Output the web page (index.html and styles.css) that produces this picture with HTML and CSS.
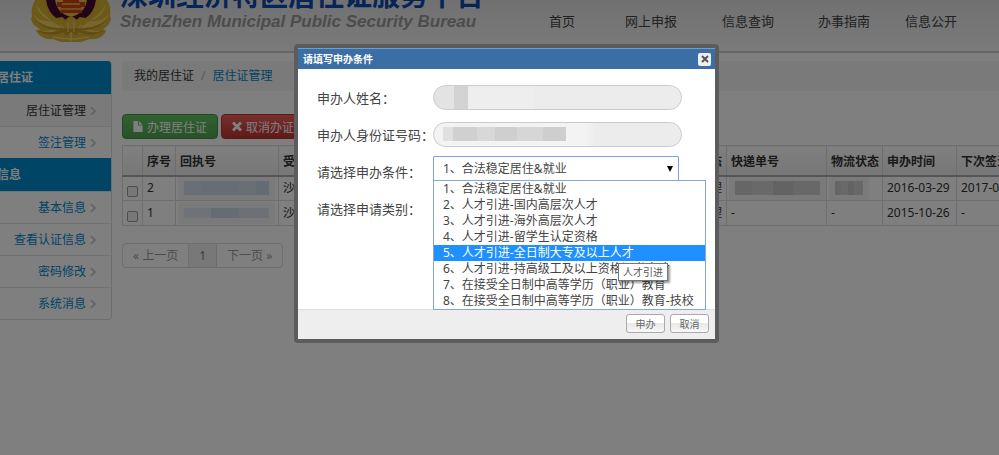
FILE: index.html
```html
<!DOCTYPE html>
<html lang="zh-CN">
<head>
<meta charset="UTF-8" />
<meta name="viewport" content="width=device-width, initial-scale=1" />
<title>深圳经济特区居住证服务平台</title>
<link rel="stylesheet" href="styles.css">
</head>
<body>
<header class="header">
  <div class="brand">
    <svg class="emblem" viewBox="0 0 80 44" aria-hidden="true">
      <path fill="#d9b130" d="M5 0C1 5 0 12 1 17L0 20c1 5 5 8 9 10l-4 2c4 6 10 9 17 8l8 3h20l9-3c7 1 13-2 16-8l-3-2c4-2 7-5 8-10l-1-4c1-5 0-11-4-16z"/>
      <path fill="#ecd05a" d="M5 5c2 9 8 15 16 17-8 1-15-2-19-7 4 8 11 14 20 15-6 3-12 2-16 1 8 5 18 3 24-3C20 22 11 15 5 5zM75 5c-2 9-8 15-16 17 8 1 15-2 19-7-4 8-11 14-20 15 6 3 12 2 16 1-8 5-18 3-24-3 10-6 19-13 25-23z"/>
      <path fill="#c0962a" d="M3 20c7 8 17 12 28 11-10 3-19 3-27-1 9 7 20 7 28 3l3 4 5-4 5 4 3-4c8 4 19 4 28-3-8 4-17 4-27 1 11 1 21-3 28-11-9 7-20 10-32 9H35C23 30 12 27 3 20z"/>
      <path fill="#42092e" stroke="#d9ac24" stroke-width="2" d="M14 0c1 10 5 16 11 20l6-1 3 3 4-3h4l4 3 3-3 6 1C61 16 65 10 66 0z"/>
      <path fill="#e0bd4a" d="M24 0h32c-1 9-5 15-16 18C29 15 25 9 24 0z"/>
      <path fill="#cc4218" d="M26 3h6V0h16v3h6v5h-4l1 6H29l1-6h-4z"/>
      <path fill="#e39a3c" d="M31 4h18v2H31zM30 9h20v2H30z"/>
      <circle cx="40" cy="25" r="5" fill="#dcb536"/>
      <path stroke="#f0dc88" fill="none" d="M29 26l4 3m4-5v9m6-9v9m8-7l-4 3M22 38l15 2h8l13-2M40 33v9"/>
    </svg>
    <div class="brand-text">
      <strong>深圳经济特区居住证服务平台</strong>
      <em>ShenZhen Municipal Public Security Bureau</em>
    </div>
  </div>
  <nav class="nav">
    <a href="#">首页</a>
    <a href="#">网上申报</a>
    <a href="#">信息查询</a>
    <a href="#">办事指南</a>
    <a href="#">信息公开</a>
  </nav>
</header>

<div class="page">
  <aside class="sidebar">
    <h2>居住证</h2>
    <a href="#" class="active">居住证管理<svg viewBox="0 0 6 8"><path d="M1 0l4 4-4 4"/></svg></a>
    <a href="#">签注管理<svg viewBox="0 0 6 8"><path d="M1 0l4 4-4 4"/></svg></a>
    <h2>信息</h2>
    <a href="#">基本信息<svg viewBox="0 0 6 8"><path d="M1 0l4 4-4 4"/></svg></a>
    <a href="#">查看认证信息<svg viewBox="0 0 6 8"><path d="M1 0l4 4-4 4"/></svg></a>
    <a href="#">密码修改<svg viewBox="0 0 6 8"><path d="M1 0l4 4-4 4"/></svg></a>
    <a href="#">系统消息<svg viewBox="0 0 6 8"><path d="M1 0l4 4-4 4"/></svg></a>
  </aside>

  <main class="main">
    <div class="breadcrumb">
      <span>我的居住证</span><i>/</i><a href="#">居住证管理</a>
    </div>
    <div class="toolbar">
      <button type="button" class="btn btn-green"><svg viewBox="0 0 10 12"><path d="M0 0h5v5h5v7H0zM6 0l4 4H6z"/></svg>办理居住证</button>
      <button type="button" class="btn btn-red"><svg viewBox="0 0 10 10"><path d="M2 0l3 3 3-3 2 2-3 3 3 3-2 2-3-3-3 3-2-2 3-3-3-3z"/></svg>取消办证</button>
    </div>
    <div class="table-wrap">
      <table>
        <colgroup>
          <col class="c-check"><col class="c-no"><col class="c-receipt"><col class="c-place"><col class="c-state">
          <col class="c-express"><col class="c-flow"><col class="c-date"><col class="c-date">
        </colgroup>
        <thead>
          <tr><th></th><th>序号</th><th>回执号</th><th>受理点</th><th class="right">办理状态</th><th>快递单号</th><th>物流状态</th><th>申办时间</th><th>下次签注</th></tr>
        </thead>
        <tbody>
          <tr>
            <td><input type="checkbox" aria-label="选择 2"></td><td>2</td><td><span class="mask mask-blue"></span></td><td>沙井</td><td class="right">已受理</td>
            <td><span class="mask"></span></td><td><span class="mask mask-short"></span></td><td>2016-03-29</td><td>2017-03-29</td>
          </tr>
          <tr>
            <td><input type="checkbox" aria-label="选择 1"></td><td>1</td><td><span class="mask mask-blue mask-low"></span></td><td>沙井</td><td class="right">已受理</td>
            <td>-</td><td>-</td><td>2015-10-26</td><td>-</td>
          </tr>
        </tbody>
      </table>
    </div>
    <div class="pager">
      <div class="pages">
        <a href="#">« 上一页</a><a href="#" class="current">1</a><a href="#">下一页 »</a>
      </div>
      <span>当前第1页</span>
    </div>
  </main>
</div>

<div class="overlay"></div>

<div class="dialog" role="dialog" aria-labelledby="dialogTitle">
  <div class="dialog-title">
    <h3 id="dialogTitle">请填写申办条件</h3>
    <button type="button" class="close" aria-label="关闭"><svg viewBox="0 0 8 8"><path d="M1 1l6 6M7 1L1 7"/></svg></button>
  </div>
  <form class="dialog-body">
    <div class="row">
      <label for="name">申办人姓名：</label>
      <input type="text" id="name" class="mask-name" readonly>
    </div>
    <div class="row">
      <label for="idNo">申办人身份证号码：</label>
      <input type="text" id="idNo" class="mask-id" readonly>
    </div>
    <div class="row">
      <label for="condition">请选择申办条件：</label>
      <div class="select-box">
        <select id="condition">
          <option>1、合法稳定居住&amp;就业</option>
        </select>
        <svg class="arrow" viewBox="0 0 6 6"><path d="M0 0h6L3 6z"/></svg>
        <ul class="options" role="listbox" aria-label="申办条件">
          <li role="option">1、合法稳定居住&amp;就业</li>
          <li role="option">2、人才引进-国内高层次人才</li>
          <li role="option">3、人才引进-海外高层次人才</li>
          <li role="option">4、人才引进-留学生认定资格</li>
          <li role="option" class="hover">5、人才引进-全日制大专及以上人才</li>
          <li role="option">6、人才引进-持高级工及以上资格证书人才</li>
          <li role="option">7、在接受全日制中高等学历（职业）教育</li>
          <li role="option">8、在接受全日制中高等学历（职业）教育-技校</li>
        </ul>
        <span class="tooltip" role="tooltip">人才引进</span>
      </div>
    </div>
    <div class="row">
      <span>请选择申请类别：</span>
    </div>
  </form>
  <div class="dialog-footer">
    <button type="button">申办</button>
    <button type="button">取消</button>
  </div>
</div>
</body>
</html>
```
FILE: styles.css
```css
* { box-sizing: border-box; }
body {
  margin: 0;
  min-height: 100vh;
  overflow: hidden;
  background: #fff;
  color: #333;
  font: 12px/18px "Noto Sans", "Noto Sans CJK SC", sans-serif;
}
a { color: #08c; text-decoration: none; }
button, input, select { font-family: inherit; margin: 0; }

.header {
  display: flex;
  height: 53px;
  overflow: hidden;
  background: linear-gradient(#e2e2e2, #f5f5f5);
  border-bottom: 2px solid #ccc;
}
.brand {
  display: flex;
  flex: none;
  align-items: flex-end;
  gap: 9px;
  width: 549px;
  padding: 0 0 8px 31px;
}
.emblem { width: 80px; height: 44px; }
.brand-text {
  display: flex;
  flex-direction: column;
  white-space: nowrap;
  padding-bottom: 10px;
}
.brand-text strong {
  color: #0b48ae;
  font-size: 28px;
  line-height: 32px;
}
.brand-text em {
  color: #999;
  font: italic bold 17px/22px "Liberation Sans", sans-serif;
}
.nav {
  display: grid;
  grid-template-columns: 76px 97px 96px 87px auto;
  align-content: start;
  padding-top: 12px;
  font-size: 13px;
  white-space: nowrap;
}
.nav a { color: #444; }

.page {
  display: flex;
  align-items: flex-start;
  gap: 10px;
  padding-top: 8px;
}
.sidebar {
  flex: none;
  width: 112px;
  overflow: hidden;
  border: 1px solid #ddd;
  border-width: 0 1px 1px 0;
  border-radius: 0 4px 4px 0;
}
.sidebar h2 {
  margin: 0 -1px 0 0;
  background: #08c;
  color: #fff;
  font-size: 12px;
  line-height: 33px;
  text-indent: -3px;
}
.sidebar a {
  display: flex;
  align-items: center;
  justify-content: flex-end;
  gap: 4px;
  height: 32px;
  padding-right: 15px;
  border-top: 1px solid #e5e5e5;
}
.sidebar .active { color: #333; background: #f5f5f5; }
.sidebar svg {
  width: 6px;
  height: 8px;
  fill: none;
  stroke: #ccc;
  stroke-width: 2;
}

.main { flex: 1; min-width: 0; }
.breadcrumb {
  display: flex;
  gap: 7px;
  padding: 6px 12px;
  background: #f5f5f5;
  border-radius: 4px 0 0 4px;
}
.breadcrumb i { color: #bbb; font-style: normal; }
.toolbar {
  display: flex;
  gap: 3px;
  margin: 23px 0 6px;
}
.btn {
  display: flex;
  align-items: center;
  gap: 4px;
  height: 25px;
  padding: 0 10px;
  border: 1px solid #3f9440;
  border-radius: 4px;
  color: #fff;
  font-size: 12px;
}
.btn svg { width: 10px; height: 11px; fill: #fff; }
.btn-green { background: linear-gradient(#62c462, #51a351); }
.btn-red { background: linear-gradient(#ee5f5b, #bd362f); border-color: #b33; }

.table-wrap { overflow: hidden; }
table {
  width: 908px;
  table-layout: fixed;
  border-collapse: collapse;
}
.c-check { width: 20px; }
.c-no { width: 33px; }
.c-receipt { width: 103px; }
.c-place { width: 388px; }
.c-state { width: 60px; }
.c-express { width: 100px; }
.c-flow { width: 56px; }
.c-date { width: 74px; }
th, td {
  height: 25px;
  padding: 0 0 0 4px;
  border: 1px solid #ddd;
  text-align: left;
  white-space: nowrap;
}
th {
  height: 30px;
  padding-top: 4px;
  border-bottom: 2px solid #aaa;
  background: linear-gradient(#fff, #eee);
}
.right { text-align: right; padding-right: 4px; }
td input {
  appearance: none;
  display: block;
  width: 11px;
  height: 11px;
  margin-top: 6px;
  border: 1px solid #999;
  border-radius: 2px;
  background: #f0f0f0;
}
.mask {
  display: block;
  width: 85px;
  height: 14px;
  margin-left: 4px;
  background: linear-gradient(90deg, #ccc 0 20%, #d2d2d2 20% 45%, #c6c6c6 45% 68%, #d0d0d0 68%);
  box-shadow: 0 0 0 6px #f5f5f5;
}
.mask-short { width: 28px; }
.mask-blue { background: linear-gradient(90deg, #d3dfea 0 20%, #ccdae8 20% 65%, #d3dfea 65% 85%, #c6d6e6 85%); }
.mask-low {
  height: 10px;
  background: linear-gradient(90deg, #dfe7ee 0 32%, #cbd9e6 32% 65%, #d9e3ec 65%);
}

.pager {
  display: flex;
  align-items: center;
  gap: 11px;
  margin-top: 17px;
  color: #777;
}
.pages {
  display: flex;
  border: 1px solid #ddd;
  border-radius: 4px;
}
.pages a {
  padding: 3px 10px;
  color: #999;
  line-height: 17px;
}
.pages a + a { border-left: 1px solid #ddd; }
.pages .current { background: #f0f0f0; color: #777; }

.overlay {
  position: fixed;
  inset: 0;
  background: rgba(0, 0, 0, 0.5);
}

.dialog {
  position: absolute;
  top: 44px;
  left: 294px;
  width: 425px;
  border: 4px solid #5c5c5c;
  border-radius: 4px;
  background: #fff;
}
.dialog-title {
  display: flex;
  align-items: center;
  justify-content: space-between;
  height: 21px;
  padding: 0 4px 0 5px;
  border-top: 1px solid #6c9ed1;
  background: #3a6ea5;
}
.dialog-title h3 {
  margin: 0;
  color: #fff;
  font-size: 10px;
}
.close {
  display: flex;
  align-items: center;
  justify-content: center;
  width: 13px;
  height: 13px;
  padding: 0;
  border: 0;
  border-radius: 2px;
  background: #eee;
}
.close svg { width: 8px; height: 8px; stroke: #555; stroke-width: 2; }
.dialog-body {
  padding: 10px 19px 0;
  height: 240px;
}
.row {
  display: grid;
  grid-template-columns: 116px 1fr;
  align-items: center;
  height: 37px;
  color: #444;
  font-size: 13px;
  white-space: nowrap;
}
.row input {
  width: 249px;
  height: 25px;
  border: 1px solid #ccc;
  border-radius: 13px;
  background: #ececec;
}
.row .mask-name {
  background: linear-gradient(90deg, #e3e3e3 0 20px, #d3d3d3 20px 34px, #eee 34px 100px, #ececec 100px);
}
.row .mask-id {
  background:
    linear-gradient(90deg, #e0e0e0 0 10px, #d0d0d0 10px 34px, #d8d8d8 34px 52px, #cfcfcf 52px 74px, #d6d6d6 74px 100px, #cecece 100px) 9px 4px / 123px 14px no-repeat,
    linear-gradient(90deg, #f3f3f3 0 150px, #ececec 162px);
}
.select-box {
  position: relative;
  align-self: start;
  padding-top: 3px;
}
.select-box select {
  appearance: none;
  display: block;
  width: 246px;
  height: 25px;
  padding: 0 9px;
  border: 1px solid #7ba3e0;
  border-radius: 1px;
  outline: 0;
  background: #fff;
  color: #444;
  font-size: 12px;
}
.arrow {
  position: absolute;
  top: 13px;
  right: 23px;
  width: 6px;
  height: 6px;
  fill: #000;
}
.options {
  position: absolute;
  top: 27px;
  left: 0;
  width: 273px;
  margin: 0;
  padding: 0;
  border: 1px solid #86a7d0;
  background: #fff;
  color: #444;
  font-size: 12px;
  line-height: 16px;
  list-style: none;
}
.options li { padding-left: 9px; }
.options .hover { background: #1e90ff; color: #fff; }
.tooltip {
  position: absolute;
  top: 110px;
  left: 185px;
  padding: 0 4px;
  border: 1px solid #777;
  background: #fff;
  box-shadow: 2px 2px 2px rgba(0, 0, 0, 0.4);
  color: #555;
  font-size: 10px;
  line-height: 16px;
}
.dialog-footer {
  display: flex;
  justify-content: flex-end;
  gap: 5px;
  height: 30px;
  padding: 4px 6px;
  border-top: 1px solid #ddd;
  background: #eee;
}
.dialog-footer button {
  width: 39px;
  height: 19px;
  padding: 0;
  border: 1px solid #aaa;
  border-radius: 3px;
  background: linear-gradient(#fff 50%, #e8e8e8 50%, #f8f8f8);
  color: #666;
  font-size: 10px;
}
```
